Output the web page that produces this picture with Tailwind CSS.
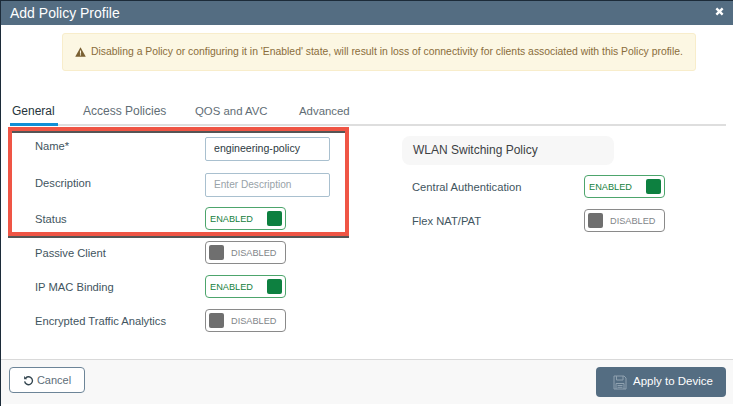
<!DOCTYPE html>
<html lang="en">
<head>
    <meta charset="UTF-8">
    <title>Add Policy Profile</title>
    <script src="https://cdn.jsdelivr.net/npm/@tailwindcss/browser@4"></script>
</head>
<body class="bg-white">
<div class="relative w-[733px] h-[406px] overflow-hidden flex flex-col bg-white border-t border-l border-[#1c2b39] font-['Liberation_Sans',sans-serif]">
    <!-- Header -->
    <div class="h-[24px] shrink-0 bg-[#546d82] text-white flex items-center justify-between pl-[9px] pr-[9px]">
        <span class="text-[14px] leading-none">Add Policy Profile</span>
        <svg class="w-[9px] h-[9px] -mt-[3px]" viewBox="0 0 10 10"><path d="M1.5 1.5l7 7M8.5 1.5l-7 7" stroke="#fff" stroke-width="2.6"/></svg>
    </div>

    <!-- Warning -->
    <div class="ml-[61px] mt-[8px] w-[634px] h-[38px] shrink-0 flex items-center pl-[12px] gap-[3px] bg-[#fcf7e3] border border-[#f8edcb] rounded-[3px] text-[#8a6d3b] text-[10.4px] whitespace-nowrap">
        <svg class="w-[11px] h-[10px] shrink-0" viewBox="0 0 12 11"><path d="M6 0.3L11.8 10.7H0.2Z" fill="#7a6033"/><path d="M5.4 3.8h1.2v3.6H5.4zM5.4 8h1.2v1.3H5.4z" fill="#fcf7e3"/></svg>
        <span class="ml-[2px]">Disabling a Policy or configuring it in 'Enabled' state, will result in loss of connectivity for clients associated with this Policy profile.</span>
    </div>

    <!-- Tabs -->
    <div class="mt-[31px] ml-[9px] w-[716px] h-[24px] shrink-0 flex border-b-2 border-[#dedede] text-[12px] text-[#5f6d75]">
        <div class="w-[48px] h-[24px] pl-[2px] border-b-[3px] border-[#0f8fd6] text-[#26343c] leading-[19px]">General</div>
        <div class="ml-[25px] w-[84px] leading-[19px]">Access Policies</div>
        <div class="ml-[28px] w-[104px] text-[11.4px] leading-[19px]">QOS and AVC</div>
        <div class="text-[11.4px] leading-[19px]">Advanced</div>
    </div>

    <!-- Form -->
    <div class="flex mt-[11px] text-[11.2px] text-[#3f5560]">
        <div class="w-[401px] pl-[34px] flex flex-col">
            <div class="flex items-center h-[24px]"><span class="w-[170px] -mt-[6px]">Name*</span>
                <div class="w-[125px] h-[24px] border border-[#a9c0cf] rounded-[2px] pl-[8px] flex items-center text-[#2d3a42] text-[10.6px]">engineering-policy</div>
            </div>
            <div class="flex items-center h-[24px] mt-[12px]"><span class="w-[170px] -mt-[3px]">Description</span>
                <div class="w-[125px] h-[24px] border border-[#a9c0cf] rounded-[2px] pl-[8px] flex items-center text-[#98a2a8] text-[10.1px]">Enter Description</div>
            </div>
            <div class="flex items-center h-[23px] mt-[10px]"><span class="w-[170px] mt-[2px]">Status</span>
                <div class="w-[81px] h-[23px] border border-[#4da56c] rounded-[4px] flex items-center justify-between pl-[4px] pr-[3px] text-[#15803d] text-[9.2px]"><span class="mt-[2px]">ENABLED</span><span class="w-[15px] h-[15px] rounded-[2px] bg-[#0d8040]"></span></div>
            </div>
            <div class="flex items-center h-[23px] mt-[11px]"><span class="w-[170px] mt-[2px]">Passive Client</span>
                <div class="w-[81px] h-[23px] border border-[#8a8a8a] rounded-[4px] flex items-center pl-[3px] text-[#7f8589] text-[9.2px]"><span class="w-[15px] h-[15px] rounded-[2px] bg-[#6f6f6f]"></span><span class="ml-[7px] mt-[3px]">DISABLED</span></div>
            </div>
            <div class="flex items-center h-[23px] mt-[11px]"><span class="w-[170px] mt-[2px]">IP MAC Binding</span>
                <div class="w-[81px] h-[23px] border border-[#4da56c] rounded-[4px] flex items-center justify-between pl-[4px] pr-[3px] text-[#15803d] text-[9.2px]"><span class="mt-[2px]">ENABLED</span><span class="w-[15px] h-[15px] rounded-[2px] bg-[#0d8040]"></span></div>
            </div>
            <div class="flex items-center h-[23px] mt-[11px]"><span class="w-[170px] mt-[2px]">Encrypted Traffic Analytics</span>
                <div class="w-[81px] h-[23px] border border-[#8a8a8a] rounded-[4px] flex items-center pl-[3px] text-[#7f8589] text-[9.2px]"><span class="w-[15px] h-[15px] rounded-[2px] bg-[#6f6f6f]"></span><span class="ml-[7px] mt-[3px]">DISABLED</span></div>
            </div>
        </div>
        <div class="flex flex-col -mt-[1px]">
            <div class="w-[212px] h-[29px] rounded-[8px] bg-[#f7f7f7] pl-[11px] pb-[2px] flex items-center text-[12px] text-[#3c4144]">WLAN Switching Policy</div>
            <div class="flex items-center h-[23px] mt-[10px] pl-[10px]"><span class="w-[172px] mt-[2px]">Central Authentication</span>
                <div class="w-[81px] h-[23px] border border-[#4da56c] rounded-[4px] flex items-center justify-between pl-[4px] pr-[3px] text-[#15803d] text-[9.2px]"><span class="mt-[2px]">ENABLED</span><span class="w-[15px] h-[15px] rounded-[2px] bg-[#0d8040]"></span></div>
            </div>
            <div class="flex items-center h-[23px] mt-[11px] pl-[10px]"><span class="w-[172px] mt-[2px]">Flex NAT/PAT</span>
                <div class="w-[81px] h-[23px] border border-[#8a8a8a] rounded-[4px] flex items-center pl-[3px] text-[#7f8589] text-[9.2px]"><span class="w-[15px] h-[15px] rounded-[2px] bg-[#6f6f6f]"></span><span class="ml-[7px] mt-[3px]">DISABLED</span></div>
            </div>
        </div>
    </div>

    <!-- Footer -->
    <div class="mt-auto mb-[2px] h-[45px] shrink-0 bg-[#f8f8f8] border-t border-[#d9d9d9] flex justify-between items-start pt-[7px] pl-[8px] pr-[7px]">
        <div class="w-[76px] h-[26px] bg-white border border-[#6d8598] rounded-[4px] flex items-center justify-center gap-[3px] text-[11px] text-[#5d6d78]">
            <svg class="w-[11px] h-[11px]" viewBox="0 0 12 12" fill="none"><path d="M3 3.2A4.3 4.3 0 1 1 1.8 7" stroke="#33454f" stroke-width="1.500"/><path d="M1.2 1.2v3.4h3.4z" fill="#33454f"/></svg>
            <span>Cancel</span>
        </div>
        <div class="w-[130px] h-[30px] bg-[#546d82] rounded-[4px] flex items-center pl-[17px] gap-[6px] text-[11.5px] text-white">
            <svg class="w-[14px] h-[15px]" viewBox="0 0 14 15" fill="none" stroke="#8fa1af"><path d="M1 1h10l2 2v11H1z"/><path d="M3.5 1v4h6.500V1M3 14V8.500h8V14M4.500 10.500h5M4.500 12.300h5"/></svg>
            <span>Apply to Device</span>
        </div>
    </div>

    <!-- Red highlight -->
    <div class="absolute left-[7px] top-[126px] w-[341px] h-[109px] border-[4px] border-[#ef5545] shadow-[inset_0_2px_0_#555,0_2px_0_#555]"></div>
</div>
</body>
</html>
